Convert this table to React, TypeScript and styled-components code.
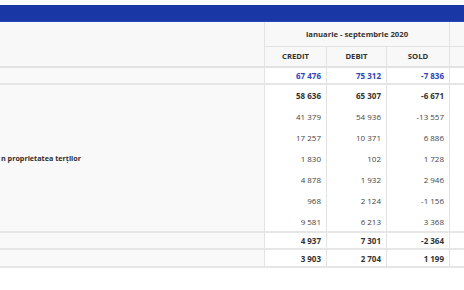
import React, { FC } from "react";
import styled, { createGlobalStyle } from "styled-components";

const GlobalStyle = createGlobalStyle`
  html, body {
    margin: 0;
    padding: 0;
    background: #ffffff;
    font-family: "Open Sans", "Noto Sans", sans-serif;
  }
  * {
    box-sizing: border-box;
  }
`;

type Row = {
  credit: string;
  debit: string;
  sold: string;
};

const groupRows: Row[] = [
  { credit: "58 636", debit: "65 307", sold: "-6 671" },
  { credit: "41 379", debit: "54 936", sold: "-13 557" },
  { credit: "17 257", debit: "10 371", sold: "6 886" },
  { credit: "1 830", debit: "102", sold: "1 728" },
  { credit: "4 878", debit: "1 932", sold: "2 946" },
  { credit: "968", debit: "2 124", sold: "-1 156" },
  { credit: "9 581", debit: "6 213", sold: "3 368" },
];

const Page = styled.div`
  padding-top: 5px;
  width: 464px;
  overflow: hidden;
`;

const TopBar = styled.div`
  height: 17px;
  background: #1a37a6;
  border-bottom: 1px solid #2c48b4;
`;

const Table = styled.table`
  table-layout: fixed;
  border-collapse: separate;
  border-spacing: 0;
  width: 530px;
  font-size: 8px;
  color: #555;
`;

const HeadCell = styled.th<{ $height: number; $thick?: boolean }>`
  height: ${(p) => p.$height}px;
  padding: 0 4px;
  background: #f8f8f8;
  color: #333;
  font-weight: 700;
  font-size: 7.7px;
  text-align: center;
  vertical-align: middle;
  border-right: 1px solid #e3e3e3;
  border-bottom: ${(p) => (p.$thick ? 2 : 1)}px solid #e3e3e3;
  white-space: nowrap;
`;

const LabelCell = styled.td<{ $height?: number }>`
  height: ${(p) => p.$height ?? 0}px;
  padding: 0 0 0 1px;
  background: #f9f9f9;
  color: #2e2e2e;
  font-weight: 700;
  font-size: 7.2px;
  text-align: left;
  vertical-align: middle;
  border-right: 1px solid #e3e3e3;
  border-bottom: 2px solid #e6e6e6;
  white-space: nowrap;
`;

const NumCell = styled.td<{
  $height: number;
  $bold?: boolean;
  $blue?: boolean;
  $last?: boolean;
}>`
  height: ${(p) => p.$height}px;
  padding: 0 5px 0 0;
  background: #ffffff;
  text-align: right;
  vertical-align: middle;
  font-weight: ${(p) => (p.$bold ? 700 : 400)};
  color: ${(p) => (p.$blue ? "#2f45b8" : p.$bold ? "#333" : "#444")};
  border-right: 1px solid #e3e3e3;
  border-bottom: ${(p) => (p.$last ? "2px solid #e6e6e6" : "none")};
  white-space: nowrap;
`;

type LineProps = {
  row: Row;
  height: number;
  bold?: boolean;
  blue?: boolean;
  last?: boolean;
};

const NumCells: FC<LineProps> = ({ row, height, bold, blue, last }) => (
  <>
    <NumCell $height={height} $bold={bold} $blue={blue} $last={last}>
      {row.credit}
    </NumCell>
    <NumCell $height={height} $bold={bold} $blue={blue} $last={last}>
      {row.debit}
    </NumCell>
    <NumCell $height={height} $bold={bold} $blue={blue} $last={last}>
      {row.sold}
    </NumCell>
    <NumCell $height={height} $last={last}></NumCell>
  </>
);

const App: FC = () => {
  return (
    <Page>
      <GlobalStyle />
      <TopBar />
      <Table>
        <colgroup>
          <col style={{ width: 265 }} />
          <col style={{ width: 62 }} />
          <col style={{ width: 60 }} />
          <col style={{ width: 63 }} />
          <col style={{ width: 80 }} />
        </colgroup>
        <thead>
          <tr>
            <HeadCell $height={46} $thick rowSpan={2}></HeadCell>
            <HeadCell $height={24} colSpan={3}>
              ianuarie - septembrie 2020
            </HeadCell>
            <HeadCell $height={24}></HeadCell>
          </tr>
          <tr>
            <HeadCell $height={21} $thick>CREDIT</HeadCell>
            <HeadCell $height={21} $thick>DEBIT</HeadCell>
            <HeadCell $height={21} $thick>SOLD</HeadCell>
            <HeadCell $height={21} $thick></HeadCell>
          </tr>
        </thead>
        <tbody>
          <tr>
            <LabelCell $height={17}></LabelCell>
            <NumCells
              row={{ credit: "67 476", debit: "75 312", sold: "-7 836" }}
              height={17}
              bold
              blue
              last
            />
          </tr>
          {groupRows.map((row, idx) => (
            <tr key={idx}>
              {idx === 0 && (
                <LabelCell rowSpan={groupRows.length}>
                  n proprietatea terților
                </LabelCell>
              )}
              <NumCells
                row={row}
                height={idx === groupRows.length - 1 ? 22 : 21}
                bold={idx === 0}
                last={idx === groupRows.length - 1}
              />
            </tr>
          ))}
          <tr>
            <LabelCell $height={17}></LabelCell>
            <NumCells
              row={{ credit: "4 937", debit: "7 301", sold: "-2 364" }}
              height={17}
              bold
              last
            />
          </tr>
          <tr>
            <LabelCell $height={18}></LabelCell>
            <NumCells
              row={{ credit: "3 903", debit: "2 704", sold: "1 199" }}
              height={18}
              bold
              last
            />
          </tr>
        </tbody>
      </Table>
    </Page>
  );
};

export default App;
